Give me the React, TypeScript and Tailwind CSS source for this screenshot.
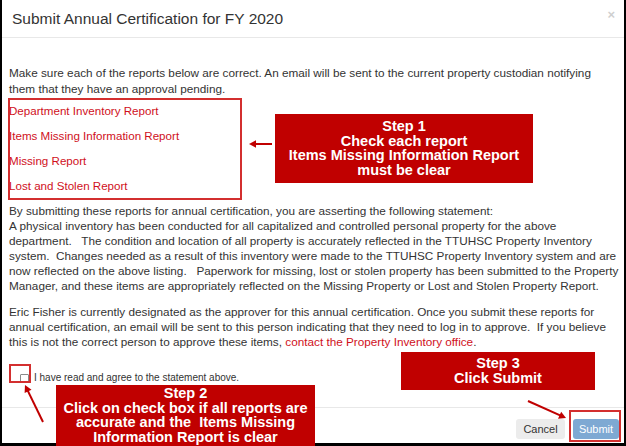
import React from "react";

const reports = [
  "Department Inventory Report",
  "Items Missing Information Report",
  "Missing Report",
  "Lost and Stolen Report",
];

const statement = [
  "By submitting these reports for annual certification, you are asserting the following statement:",
  "A physical inventory has been conducted for all capitalized and controlled personal property for the above",
  "department.   The condition and location of all property is accurately reflected in the TTUHSC Property Inventory",
  "system.  Changes needed as a result of this inventory were made to the TTUHSC Property Inventory system and are",
  "now reflected on the above listing.   Paperwork for missing, lost or stolen property has been submitted to the Property",
  "Manager, and these items are appropriately reflected on the Missing Property or Lost and Stolen Property Report.",
];

function Arrow({ x1, y1, x2, y2 }: { x1: number; y1: number; x2: number; y2: number }) {
  const a = Math.atan2(y2 - y1, x2 - x1);
  const len = 8;
  const spread = 0.5;
  const p1 = [x2 - len * Math.cos(a - spread), y2 - len * Math.sin(a - spread)];
  const p2 = [x2 - len * Math.cos(a + spread), y2 - len * Math.sin(a + spread)];
  return (
    <g>
      <line x1={x1} y1={y1} x2={x2 - 4 * Math.cos(a)} y2={y2 - 4 * Math.sin(a)} stroke="#c00000" strokeWidth={2} />
      <polygon points={`${x2},${y2} ${p1[0]},${p1[1]} ${p2[0]},${p2[1]}`} fill="#c00000" />
    </g>
  );
}

export default function App() {
  return (
    <div
      className="relative w-[626px] h-[446px] bg-white border-l-2 border-r-2 border-b-[3px] border-black text-[#333] flex flex-col"
      style={{ fontFamily: '"Liberation Sans", Arial, sans-serif' }}
    >
      {/* header */}
      <div className="h-[38px] shrink-0 flex items-center justify-between pl-[10px] pr-[9px] border-b border-[#e8e8e8]">
        <h4 className="text-[15.5px] leading-none text-[#333]">Submit Annual Certification for FY 2020</h4>
        <span className="text-[13px] font-bold text-[#cfcfcf] leading-none -mt-[8px]">×</span>
      </div>

      {/* body */}
      <div className="flex-1 pl-[7px] pr-[2px] pt-[27px] text-[11.75px] leading-[15.5px]">
        <p className="whitespace-nowrap">
          Make sure each of the reports below are correct. An email will be sent to the current property custodian notifying
          <br />
          them that they have an approval pending.
        </p>
        <ul className="mt-[2px]">
          {reports.map((r) => (
            <li key={r} className="h-[25px] flex items-center text-[#d0101c] text-[11.6px]">
              {r}
            </li>
          ))}
        </ul>
        <p className="mt-[5px] leading-[15px] whitespace-pre">
          {statement.map((l, i) => (
            <span key={i} className="block">
              {l}
            </span>
          ))}
        </p>
        <p className="mt-[11px] leading-[15px] whitespace-pre">
          <span className="block">
            Eric Fisher is currently designated as the approver for this annual certification. Once you submit these reports for
          </span>
          <span className="block">
            annual certification, an email will be sent to this person indicating that they need to log in to approve.  If you believe
          </span>
          <span className="block">
            this is not the correct person to approve these items, <span className="text-[#d0101c]">contact the Property Inventory office</span>.
          </span>
        </p>
        <label className="mt-[20px] pl-[11px] flex items-center h-[18px] text-[10px]">
          <span className="w-[9px] h-[9px] border border-[#8a8a8a] rounded-[1px] bg-white shrink-0" />
          <span className="ml-[5px]">I have read and agree to the statement above.</span>
        </label>
      </div>

      {/* footer */}
      <div className="h-[36px] shrink-0 border-t border-[#e8e8e8] flex items-start justify-end gap-[8px] pt-[11px] pr-[5px] text-[11px]">
        <button className="w-[49px] h-[20px] rounded-[3px] bg-[#ececec] text-[#333]">Cancel</button>
        <button className="w-[46px] h-[20px] rounded-[3px] bg-[#7ea9d3] text-white">Submit</button>
      </div>

      {/* annotations */}
      <div className="absolute left-[6px] top-[98px] w-[234px] h-[102px] border-2 border-[#d32f2f]" />
      <div className="absolute left-[7px] top-[364px] w-[22px] h-[19px] border-2 border-[#d32f2f]" />
      <div className="absolute left-[567px] top-[410px] w-[52px] h-[32px] border-2 border-[#d32f2f]" />

      <div className="absolute left-[273px] top-[114px] w-[258px] h-[69px] bg-[#c00000] text-white font-bold text-[14.5px] leading-[14.5px] text-center pt-[5px]">
        Step 1<br />Check each report<br />Items Missing Information Report<br />must be clear
      </div>
      <div className="absolute left-[399px] top-[352px] w-[194px] h-[38px] bg-[#c00000] text-white font-bold text-[14.5px] leading-[14.5px] text-center pt-[4px]">
        Step 3<br />Click Submit
      </div>
      <div className="absolute left-[54px] top-[385px] w-[259px] h-[61px] bg-[#c00000] text-white font-bold text-[14.5px] leading-[14.7px] text-center pt-[1px] whitespace-pre">
        {"Step 2\nClick on check box if all reports are\naccurate and the  Items Missing\nInformation Report is clear"}
      </div>

      <svg className="absolute left-0 top-0 pointer-events-none" width={624} height={446}>
        <Arrow x1={270} y1={144} x2={247} y2={144} />
        <Arrow x1={41} y1={422} x2={23} y2={385} />
        <Arrow x1={526} y1={401} x2={564} y2={418} />
      </svg>
    </div>
  );
}
